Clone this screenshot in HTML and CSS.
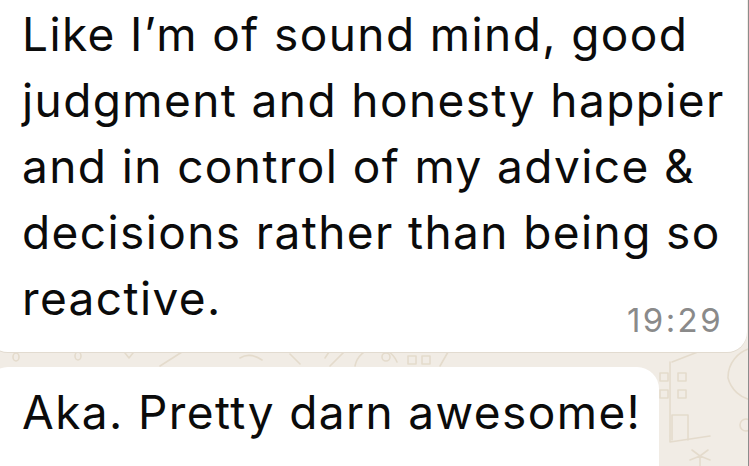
FILE: index.html
```html
<!DOCTYPE html>
<html lang="en">

<head>
    <meta charset="UTF-8">
    <meta name="viewport" content="width=device-width, initial-scale=1.0">
    <title>Chat</title>
    <link rel="stylesheet" href="styles.css">
</head>

<body>
    <div class="chat">
        <!-- wallpaper doodles, sits in the same grid cell as the messages -->
        <svg class="doodles" viewBox="0 0 749 466" width="749" height="466">
            <g fill="none" stroke="#e4dbcc" stroke-width="1.6" stroke-linecap="round" stroke-linejoin="round">
                <ellipse cx="16" cy="357" rx="3" ry="4" />
                <ellipse cx="78" cy="356" rx="3" ry="4" />
                <path d="M125 353 l4 5 l4 -5" />
                <path d="M160 366 l22 -14" />
                <path d="M240 358 q10 -6 22 2" />
                <path d="M290 354 l10 10" />
                <path d="M330 366 l14 -14 l26 0" />
                <path d="M325 358 l4 -6" />
                <path d="M355 366 a22 22 0 0 1 42 -4" />
                <circle cx="386" cy="357" r="4" />
                <rect x="408" y="356" width="8" height="8" />
                <rect x="422" y="356" width="8" height="8" />
                <path d="M440 366 l8 -14 l40 0" />
                <path d="M670 362 l0 80 l40 -6" />
                <path d="M672 362 l36 -14" />
                <rect x="660" y="373" width="8" height="8" />
                <rect x="678" y="373" width="8" height="8" />
                <rect x="660" y="390" width="8" height="8" />
                <rect x="678" y="390" width="8" height="8" />
                <path d="M672 440 l0 -25 l16 0 l0 25" />
                <path d="M752 348 a30 30 0 0 0 -24 30 a30 30 0 0 0 24 22" />
                <circle cx="746" cy="425" r="6" />
                <path d="M700 466 l0 -10 m0 0 l-8 -6 m8 6 l8 -6 m-8 6 l-10 4 m10 -4 l10 4" />
            </g>
        </svg>

        <div class="messages">
            <div class="bubble bubble-first">
                <p class="text">Like I’m of sound mind, good judgment and honesty happier and in control of my advice &amp; decisions rather than being so reactive.<span class="time">19:29</span></p>
            </div>

            <div class="bubble bubble-next">
                <p class="text">Aka. Pretty darn awesome!</p>
            </div>
        </div>
    </div>
</body>

</html>
```

FILE: styles.css
```css
html, body {
    margin: 0;
    padding: 0;
}

body {
    width: 749px;
    height: 466px;
    overflow: hidden;
    background: #f1ece5;
    font-family: Inter, "Liberation Sans", sans-serif;
    color: #0b0b0b;
    border-right: 1px solid #8c8c8c;
    box-sizing: border-box;
}

.chat {
    display: grid;
    height: 466px;
    overflow: hidden;
}

.doodles,
.messages {
    grid-area: 1 / 1;
}

.messages {
    display: flex;
    flex-direction: column;
    gap: 15px;
    margin-top: -18px;
}

.bubble {
    background: #ffffff;
    margin-left: -14px;
    padding: 0 10px 0 36px;
}

.bubble-first {
    display: flow-root;
    width: 761px;
    box-sizing: border-box;
    border-radius: 0 0 20px 22px;
    box-shadow: 0 1px 0 #e2dbd0;
    padding-top: 19px;
    padding-bottom: 12px;
}

.bubble-next {
    width: 673px;
    box-sizing: border-box;
    border-radius: 22px 22px 0 0;
    padding-top: 12px;
    height: 100px;
}

.text {
    margin: 0;
    font-size: 46px;
    line-height: 66px;
    letter-spacing: 1.4px;
}

/* timestamp floats into the last line of the message */
.time {
    float: right;
    margin-top: 35px;
    margin-right: 14px;
    font-size: 33px;
    line-height: 40px;
    letter-spacing: 2.4px;
    color: #8a8a8a;
}
```
